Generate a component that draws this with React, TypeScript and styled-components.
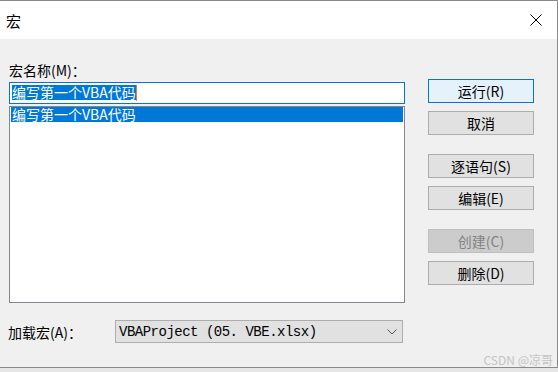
import { createGlobalStyle } from 'styled-components'
import styled from 'styled-components'

const GlobalStyle = createGlobalStyle`
  html, body {
    margin: 0;
    padding: 0;
    background: #e6e6e6;
  }
  body {
    font-family: "Noto Sans CJK SC", "Liberation Sans", sans-serif;
    font-size: 14px;
    color: #000;
  }
`

const Window = styled.div`
  position: relative;
  width: 558px;
  height: 368px;
  box-sizing: border-box;
  border-top: 1px solid #8a8a8a;
  border-right: 1px solid #8a8a8a;
  border-bottom: 1px solid #8a8a8a;
  display: flex;
  flex-direction: column;
  background: #f0f0f0;
`

const TitleBar = styled.div`
  height: 38px;
  flex: none;
  background: #fff;
  display: flex;
  align-items: center;
  justify-content: space-between;
  padding: 0 15px 0 6px;
`

const Title = styled.span`
  font-size: 15px;
  line-height: 15px;
`

const Body = styled.div`
  flex: 1;
  display: grid;
  grid-template-columns: 396px 106px;
  column-gap: 23px;
  padding-left: 9px;
`

const LeftColumn = styled.div`
  display: flex;
  flex-direction: column;
  padding-top: 20px;
`

const Label = styled.div`
  height: 22px;
  line-height: 22px;
  margin-bottom: 1px;
  white-space: nowrap;
`

const TextBox = styled.div`
  height: 22px;
  box-sizing: border-box;
  border: 1px solid #0078d7;
  background: #fff;
  padding: 2px 0 0 2px;
  display: flex;
  align-items: flex-start;
`

const Selected = styled.span`
  display: inline-block;
  height: 15px;
  line-height: 15px;
  background: #0078d7;
  color: #fff;
  white-space: nowrap;
`

const Caret = styled.span`
  display: inline-block;
  width: 1px;
  height: 16px;
  background: #e87b2d;
`

const ListBox = styled.div`
  margin-top: 2px;
  height: 197px;
  box-sizing: border-box;
  border: 1px solid #828790;
  background: #fff;
  padding: 0 1px;
`

const ListItem = styled.div<{ $active?: boolean }>`
  height: 15px;
  line-height: 15px;
  padding-left: 1px;
  background: ${p => (p.$active ? '#0078d7' : 'transparent')};
  color: ${p => (p.$active ? '#fff' : '#000')};
  white-space: nowrap;
`

const ComboRow = styled.div`
  margin-top: 17px;
  margin-left: -1px;
  display: flex;
  align-items: center;
  height: 23px;
`

const ComboLabel = styled.span`
  width: 107px;
  flex: none;
  white-space: nowrap;
`

const Combo = styled.div`
  width: 288px;
  height: 23px;
  box-sizing: border-box;
  border: 1px solid #adadad;
  background: #e1e1e1;
  display: flex;
  align-items: center;
  justify-content: space-between;
  padding: 0 5px 0 3px;
`

const ComboText = styled.span`
  font-family: "Liberation Mono", "Noto Sans CJK SC", monospace;
  font-size: 14px;
  letter-spacing: -0.5px;
  white-space: nowrap;
`

const RightColumn = styled.div`
  display: flex;
  flex-direction: column;
  padding-top: 40px;
`

const ButtonGroup = styled.div`
  display: flex;
  flex-direction: column;
  gap: 8px;
  & + & {
    margin-top: 19px;
  }
`

const DialogButton = styled.div<{ $variant?: 'default' | 'disabled' }>`
  height: 24px;
  box-sizing: border-box;
  display: flex;
  align-items: center;
  justify-content: center;
  font-size: 14px;
  line-height: 14px;
  padding-bottom: 1px;
  white-space: nowrap;
  border: 1px solid ${p => (p.$variant === 'default' ? '#0078d7' : p.$variant === 'disabled' ? '#bfbfbf' : '#adadad')};
  background: ${p => (p.$variant === 'default' ? '#e5f1fb' : p.$variant === 'disabled' ? '#cccccc' : '#e1e1e1')};
  color: ${p => (p.$variant === 'disabled' ? '#838383' : '#000')};
`

const Watermark = styled.span`
  position: absolute;
  right: 4px;
  bottom: 1px;
  font-family: "Noto Sans CJK SC", "Liberation Sans", sans-serif;
  font-size: 12px;
  line-height: 13px;
  color: #c4c4c4;
`

function CloseIcon () {
  return (
    <svg width='12' height='12' viewBox='0 0 12 12'>
      <path d='M0.5 0.5 L11.5 11.5 M11.5 0.5 L0.5 11.5' stroke='#000' strokeWidth='1' fill='none' />
    </svg>
  )
}

function Chevron () {
  return (
    <svg width='10' height='6' viewBox='0 0 10 6'>
      <path d='M0.5 0.5 L5 5 L9.5 0.5' stroke='#555' strokeWidth='1' fill='none' />
    </svg>
  )
}

export default function App () {
  return (
    <>
      <GlobalStyle />
      <Window>
        <TitleBar>
          <Title>宏</Title>
          <CloseIcon />
        </TitleBar>
        <Body>
          <LeftColumn>
            <Label>宏名称(M)：</Label>
            <TextBox>
              <Selected>编写第一个VBA代码</Selected>
              <Caret />
            </TextBox>
            <ListBox>
              <ListItem $active>编写第一个VBA代码</ListItem>
            </ListBox>
            <ComboRow>
              <ComboLabel>加载宏(A)：</ComboLabel>
              <Combo>
                <ComboText>VBAProject (05. VBE.xlsx)</ComboText>
                <Chevron />
              </Combo>
            </ComboRow>
          </LeftColumn>
          <RightColumn>
            <ButtonGroup>
              <DialogButton $variant='default'>运行(R)</DialogButton>
              <DialogButton>取消</DialogButton>
            </ButtonGroup>
            <ButtonGroup>
              <DialogButton>逐语句(S)</DialogButton>
              <DialogButton>编辑(E)</DialogButton>
            </ButtonGroup>
            <ButtonGroup>
              <DialogButton $variant='disabled'>创建(C)</DialogButton>
              <DialogButton>删除(D)</DialogButton>
            </ButtonGroup>
          </RightColumn>
        </Body>
        <Watermark>CSDN @凉哥</Watermark>
      </Window>
    </>
  )
}
